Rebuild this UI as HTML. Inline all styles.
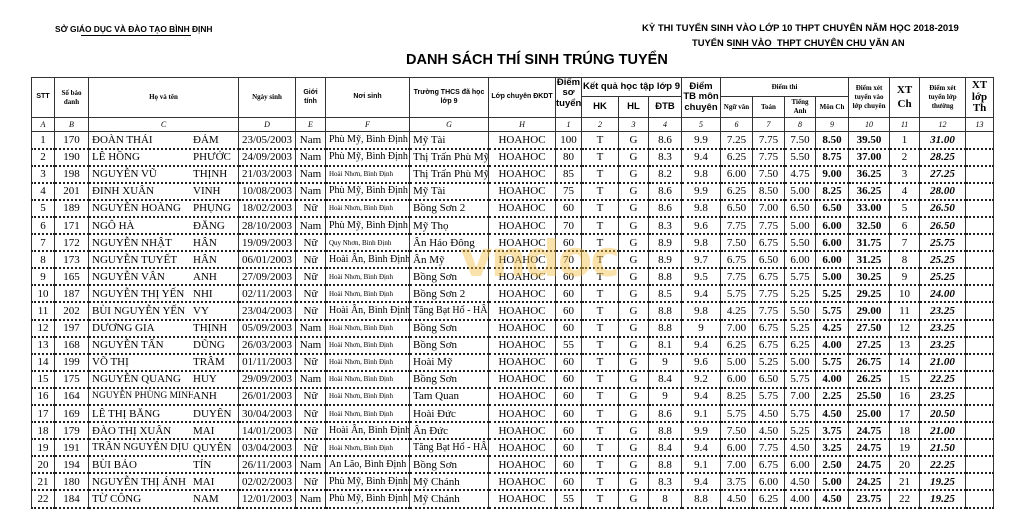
<!DOCTYPE html>
<html><head><meta charset="utf-8">
<style>
html,body{margin:0;padding:0;background:#fff;width:1024px;height:513px;overflow:hidden;position:relative;font-family:"Liberation Serif",serif;color:#000}
.h{position:absolute;font-family:"Liberation Sans",sans-serif;font-weight:bold;white-space:nowrap}
table{position:absolute;left:31px;top:77px;width:962px;border-collapse:collapse;table-layout:fixed;border:1.5px solid #222}
td{border-left:1px solid #333;border-right:1px solid #333;padding:0;text-align:center;overflow:hidden;white-space:nowrap;line-height:1}
thead td{border:1px solid #333;font-weight:bold;font-size:7px;line-height:1.25;white-space:normal}
.sn{font-family:"Liberation Sans",sans-serif}
.big{font-size:9.5px}
.lt td{font-style:italic;font-size:8px;height:13px;border:1px solid #333;font-weight:normal}
tbody.d tr{height:17.1px}
tbody.d td{font-size:11px;line-height:14px;border-bottom:2px dotted #222}
.l{text-align:left;padding-left:3px}
.p{font-size:10px!important}
.sm{font-size:7px!important}
.b{font-weight:bold}
.bi{font-weight:bold;font-style:italic}
.nm i{font-style:normal;display:inline-block;width:101px;overflow:hidden;vertical-align:top}
.wm{position:absolute;left:460px;top:230px;font-family:"DejaVu Sans",sans-serif;font-weight:bold;font-size:50px;color:rgba(245,190,70,.45);letter-spacing:-2px}
</style></head><body>
<div class="h" style="left:55px;top:24px;font-size:8.4px">SỞ GIÁO DỤC VÀ ĐÀO TẠO BÌNH ĐỊNH</div>
<div style="position:absolute;left:81px;top:35px;width:110px;border-top:1px solid #000"></div>
<div class="h" style="left:642px;top:23px;font-size:9.5px">KỲ THI TUYỂN SINH VÀO LỚP 10 THPT CHUYÊN NĂM HỌC 2018-2019</div>
<div class="h" style="left:692px;top:37px;font-size:9.4px">TUYỂN SINH VÀO &nbsp;THPT CHUYÊN CHU VĂN AN</div>
<div style="position:absolute;left:732px;top:48px;width:140px;border-top:1px solid #000"></div>
<div class="h" style="left:406px;top:52px;font-size:14.5px">DANH SÁCH THÍ SINH TRÚNG TUYỂN</div>
<table>
<colgroup>
<col style="width:23px"><col style="width:34px"><col style="width:150px"><col style="width:57px"><col style="width:30px"><col style="width:84px"><col style="width:79px"><col style="width:67px"><col style="width:26px"><col style="width:37px"><col style="width:30px"><col style="width:33px"><col style="width:39px"><col style="width:32px"><col style="width:32px"><col style="width:31px"><col style="width:33px"><col style="width:41px"><col style="width:30px"><col style="width:46px"><col style="width:28px">
</colgroup>
<thead>
<tr style="height:19px">
<td rowspan="2" class="sn">STT</td><td rowspan="2">Số báo danh</td><td rowspan="2">Họ và tên</td><td rowspan="2">Ngày sinh</td><td rowspan="2" class="sn">Giới tính</td><td rowspan="2" class="sn">Nơi sinh</td><td rowspan="2" class="sn">Trường THCS đã học lớp 9</td><td rowspan="2" class="sn">Lớp chuyên ĐKDT</td>
<td rowspan="2" class="sn big" style="vertical-align:top;line-height:1.1">Điểm sơ tuyển</td>
<td colspan="3" class="sn big">Kết quả học tập lớp 9</td>
<td rowspan="2" class="sn big" style="line-height:1.1">Điểm TB môn chuyên</td>
<td colspan="4">Điểm thi</td>
<td rowspan="2">Điểm xét tuyển vào lớp chuyên</td>
<td rowspan="2" style="font-size:11px">XT Ch</td>
<td rowspan="2">Điểm xét tuyển lớp thường</td>
<td rowspan="2" style="font-size:11px;line-height:1.05">XT lớp Th</td>
</tr>
<tr style="height:21px">
<td class="sn big">HK</td><td class="sn big">HL</td><td class="sn big">ĐTB</td>
<td>Ngữ văn</td><td>Toán</td><td>Tiếng Anh</td><td>Môn Ch</td>
</tr>
<tr class="lt"><td>A</td><td>B</td><td>C</td><td>D</td><td>E</td><td>F</td><td>G</td><td>H</td><td>1</td><td>2</td><td>3</td><td>4</td><td>5</td><td>6</td><td>7</td><td>8</td><td>9</td><td>10</td><td>11</td><td>12</td><td>13</td></tr>
</thead>
<tbody class="d">
<tr><td>1</td><td>170</td><td class="l nm"><i>ĐOÀN THÁI</i>ĐẢM</td><td>23/05/2003</td><td>Nam</td><td class="l p">Phù Mỹ, Bình Định</td><td class="l">Mỹ Tài</td><td>HOAHOC</td><td>100</td><td>T</td><td>G</td><td>8.6</td><td>9.9</td><td>7.25</td><td>7.75</td><td>7.50</td><td class="b">8.50</td><td class="b">39.50</td><td>1</td><td class="bi">31.00</td><td></td></tr>
<tr><td>2</td><td>190</td><td class="l nm"><i>LÊ HỒNG</i>PHƯỚC</td><td>24/09/2003</td><td>Nam</td><td class="l p">Phù Mỹ, Bình Định</td><td class="l">Thị Trấn Phù Mỹ</td><td>HOAHOC</td><td>80</td><td>T</td><td>G</td><td>8.3</td><td>9.4</td><td>6.25</td><td>7.75</td><td>5.50</td><td class="b">8.75</td><td class="b">37.00</td><td>2</td><td class="bi">28.25</td><td></td></tr>
<tr><td>3</td><td>198</td><td class="l nm"><i>NGUYỄN VŨ</i>THỊNH</td><td>21/03/2003</td><td>Nam</td><td class="l sm">Hoài Nhơn, Bình Định</td><td class="l">Thị Trấn Phù Mỹ</td><td>HOAHOC</td><td>85</td><td>T</td><td>G</td><td>8.2</td><td>9.8</td><td>6.00</td><td>7.50</td><td>4.75</td><td class="b">9.00</td><td class="b">36.25</td><td>3</td><td class="bi">27.25</td><td></td></tr>
<tr><td>4</td><td>201</td><td class="l nm"><i>ĐINH XUÂN</i>VINH</td><td>10/08/2003</td><td>Nam</td><td class="l p">Phù Mỹ, Bình Định</td><td class="l">Mỹ Tài</td><td>HOAHOC</td><td>75</td><td>T</td><td>G</td><td>8.6</td><td>9.9</td><td>6.25</td><td>8.50</td><td>5.00</td><td class="b">8.25</td><td class="b">36.25</td><td>4</td><td class="bi">28.00</td><td></td></tr>
<tr><td>5</td><td>189</td><td class="l nm"><i>NGUYỄN HOÀNG</i>PHỤNG</td><td>18/02/2003</td><td>Nữ</td><td class="l sm">Hoài Nhơn, Bình Định</td><td class="l">Bồng Sơn 2</td><td>HOAHOC</td><td>60</td><td>T</td><td>G</td><td>8.6</td><td>9.8</td><td>6.50</td><td>7.00</td><td>6.50</td><td class="b">6.50</td><td class="b">33.00</td><td>5</td><td class="bi">26.50</td><td></td></tr>
<tr><td>6</td><td>171</td><td class="l nm"><i>NGÔ HÀ</i>ĐĂNG</td><td>28/10/2003</td><td>Nam</td><td class="l p">Phù Mỹ, Bình Định</td><td class="l">Mỹ Thọ</td><td>HOAHOC</td><td>70</td><td>T</td><td>G</td><td>8.3</td><td>9.6</td><td>7.75</td><td>7.75</td><td>5.00</td><td class="b">6.00</td><td class="b">32.50</td><td>6</td><td class="bi">26.50</td><td></td></tr>
<tr><td>7</td><td>172</td><td class="l nm"><i>NGUYỄN NHẬT</i>HÂN</td><td>19/09/2003</td><td>Nữ</td><td class="l sm">Quy Nhơn, Bình Định</td><td class="l">Ân Hảo Đông</td><td>HOAHOC</td><td>60</td><td>T</td><td>G</td><td>8.9</td><td>9.8</td><td>7.50</td><td>6.75</td><td>5.50</td><td class="b">6.00</td><td class="b">31.75</td><td>7</td><td class="bi">25.75</td><td></td></tr>
<tr><td>8</td><td>173</td><td class="l nm"><i>NGUYỄN TUYẾT</i>HÂN</td><td>06/01/2003</td><td>Nữ</td><td class="l p">Hoài Ân, Bình Định</td><td class="l">Ân Mỹ</td><td>HOAHOC</td><td>70</td><td>T</td><td>G</td><td>8.9</td><td>9.7</td><td>6.75</td><td>6.50</td><td>6.00</td><td class="b">6.00</td><td class="b">31.25</td><td>8</td><td class="bi">25.25</td><td></td></tr>
<tr><td>9</td><td>165</td><td class="l nm"><i>NGUYỄN VÂN</i>ANH</td><td>27/09/2003</td><td>Nữ</td><td class="l sm">Hoài Nhơn, Bình Định</td><td class="l">Bồng Sơn</td><td>HOAHOC</td><td>60</td><td>T</td><td>G</td><td>8.8</td><td>9.5</td><td>7.75</td><td>6.75</td><td>5.75</td><td class="b">5.00</td><td class="b">30.25</td><td>9</td><td class="bi">25.25</td><td></td></tr>
<tr><td>10</td><td>187</td><td class="l nm"><i>NGUYỄN THỊ YẾN</i>NHI</td><td>02/11/2003</td><td>Nữ</td><td class="l sm">Hoài Nhơn, Bình Định</td><td class="l">Bồng Sơn 2</td><td>HOAHOC</td><td>60</td><td>T</td><td>G</td><td>8.5</td><td>9.4</td><td>5.75</td><td>7.75</td><td>5.25</td><td class="b">5.25</td><td class="b">29.25</td><td>10</td><td class="bi">24.00</td><td></td></tr>
<tr><td>11</td><td>202</td><td class="l nm"><i>BÙI NGUYỄN YẾN</i>VY</td><td>23/04/2003</td><td>Nữ</td><td class="l p">Hoài Ân, Bình Định</td><td class="l p">Tăng Bạt Hổ - HÂ</td><td>HOAHOC</td><td>60</td><td>T</td><td>G</td><td>8.8</td><td>9.8</td><td>4.25</td><td>7.75</td><td>5.50</td><td class="b">5.75</td><td class="b">29.00</td><td>11</td><td class="bi">23.25</td><td></td></tr>
<tr><td>12</td><td>197</td><td class="l nm"><i>DƯƠNG GIA</i>THỊNH</td><td>05/09/2003</td><td>Nam</td><td class="l sm">Hoài Nhơn, Bình Định</td><td class="l">Bồng Sơn</td><td>HOAHOC</td><td>60</td><td>T</td><td>G</td><td>8.8</td><td>9</td><td>7.00</td><td>6.75</td><td>5.25</td><td class="b">4.25</td><td class="b">27.50</td><td>12</td><td class="bi">23.25</td><td></td></tr>
<tr><td>13</td><td>168</td><td class="l nm"><i>NGUYỄN TẤN</i>DŨNG</td><td>26/03/2003</td><td>Nam</td><td class="l sm">Hoài Nhơn, Bình Định</td><td class="l">Bồng Sơn</td><td>HOAHOC</td><td>55</td><td>T</td><td>G</td><td>8.1</td><td>9.4</td><td>6.25</td><td>6.75</td><td>6.25</td><td class="b">4.00</td><td class="b">27.25</td><td>13</td><td class="bi">23.25</td><td></td></tr>
<tr><td>14</td><td>199</td><td class="l nm"><i>VÕ THỊ</i>TRÂM</td><td>01/11/2003</td><td>Nữ</td><td class="l sm">Hoài Nhơn, Bình Định</td><td class="l">Hoài Mỹ</td><td>HOAHOC</td><td>60</td><td>T</td><td>G</td><td>9</td><td>9.6</td><td>5.00</td><td>5.25</td><td>5.00</td><td class="b">5.75</td><td class="b">26.75</td><td>14</td><td class="bi">21.00</td><td></td></tr>
<tr><td>15</td><td>175</td><td class="l nm"><i>NGUYỄN QUANG</i>HUY</td><td>29/09/2003</td><td>Nam</td><td class="l sm">Hoài Nhơn, Bình Định</td><td class="l">Bồng Sơn</td><td>HOAHOC</td><td>60</td><td>T</td><td>G</td><td>8.4</td><td>9.2</td><td>6.00</td><td>6.50</td><td>5.75</td><td class="b">4.00</td><td class="b">26.25</td><td>15</td><td class="bi">22.25</td><td></td></tr>
<tr><td>16</td><td>164</td><td class="l nm"><i style="font-size:9.5px">NGUYỄN PHÙNG MINH</i>ANH</td><td>26/01/2003</td><td>Nữ</td><td class="l sm">Hoài Nhơn, Bình Định</td><td class="l">Tam Quan</td><td>HOAHOC</td><td>60</td><td>T</td><td>G</td><td>9</td><td>9.4</td><td>8.25</td><td>5.75</td><td>7.00</td><td class="b">2.25</td><td class="b">25.50</td><td>16</td><td class="bi">23.25</td><td></td></tr>
<tr><td>17</td><td>169</td><td class="l nm"><i>LÊ THỊ BĂNG</i>DUYÊN</td><td>30/04/2003</td><td>Nữ</td><td class="l sm">Hoài Nhơn, Bình Định</td><td class="l">Hoài Đức</td><td>HOAHOC</td><td>60</td><td>T</td><td>G</td><td>8.6</td><td>9.1</td><td>5.75</td><td>4.50</td><td>5.75</td><td class="b">4.50</td><td class="b">25.00</td><td>17</td><td class="bi">20.50</td><td></td></tr>
<tr><td>18</td><td>179</td><td class="l nm"><i>ĐÀO THỊ XUÂN</i>MAI</td><td>14/01/2003</td><td>Nữ</td><td class="l p">Hoài Ân, Bình Định</td><td class="l">Ân Đức</td><td>HOAHOC</td><td>60</td><td>T</td><td>G</td><td>8.8</td><td>9.9</td><td>7.50</td><td>4.50</td><td>5.25</td><td class="b">3.75</td><td class="b">24.75</td><td>18</td><td class="bi">21.00</td><td></td></tr>
<tr><td>19</td><td>191</td><td class="l nm"><i style="font-size:10.5px">TRẦN NGUYỄN DỊU</i>QUYÊN</td><td>03/04/2003</td><td>Nữ</td><td class="l sm">Hoài Nhơn, Bình Định</td><td class="l p">Tăng Bạt Hổ - HÂ</td><td>HOAHOC</td><td>60</td><td>T</td><td>G</td><td>8.4</td><td>9.4</td><td>6.00</td><td>7.75</td><td>4.50</td><td class="b">3.25</td><td class="b">24.75</td><td>19</td><td class="bi">21.50</td><td></td></tr>
<tr><td>20</td><td>194</td><td class="l nm"><i>BÙI BẢO</i>TÍN</td><td>26/11/2003</td><td>Nam</td><td class="l p">An Lão, Bình Định</td><td class="l">Bồng Sơn</td><td>HOAHOC</td><td>60</td><td>T</td><td>G</td><td>8.8</td><td>9.1</td><td>7.00</td><td>6.75</td><td>6.00</td><td class="b">2.50</td><td class="b">24.75</td><td>20</td><td class="bi">22.25</td><td></td></tr>
<tr><td>21</td><td>180</td><td class="l nm"><i>NGUYỄN THỊ ÁNH</i>MAI</td><td>02/02/2003</td><td>Nữ</td><td class="l p">Phù Mỹ, Bình Định</td><td class="l">Mỹ Chánh</td><td>HOAHOC</td><td>60</td><td>T</td><td>G</td><td>8.3</td><td>9.4</td><td>3.75</td><td>6.00</td><td>4.50</td><td class="b">5.00</td><td class="b">24.25</td><td>21</td><td class="bi">19.25</td><td></td></tr>
<tr><td>22</td><td>184</td><td class="l nm"><i>TỪ CÔNG</i>NAM</td><td>12/01/2003</td><td>Nam</td><td class="l p">Phù Mỹ, Bình Định</td><td class="l">Mỹ Chánh</td><td>HOAHOC</td><td>55</td><td>T</td><td>G</td><td>8</td><td>8.8</td><td>4.50</td><td>6.25</td><td>4.00</td><td class="b">4.50</td><td class="b">23.75</td><td>22</td><td class="bi">19.25</td><td></td></tr>
</tbody>
</table>
<div class="wm">vndoc</div>
</body></html>
